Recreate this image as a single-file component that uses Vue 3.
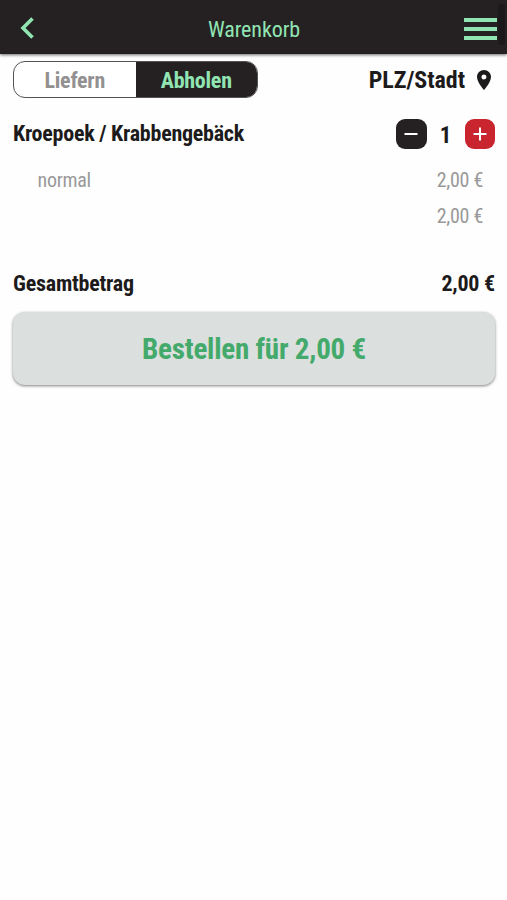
<script setup>
import { computed, ref } from "vue";

const mode = ref("abholen");
const amount = ref(1);
const price = 2;

const format = (value) => `${value.toFixed(2).replace(".", ",")} €`;
const total = computed(() => format(amount.value * price));

const decrease = () => {
  if (amount.value > 1) {
    amount.value--;
  }
};
</script>

<template>
  <div class="page">
    <header class="topbar">
      <button class="back" aria-label="Zurück">
        <svg width="16" height="24" viewBox="0 0 16 24">
          <path d="M13.500 2.500 L4 12 L13.500 21.500" />
        </svg>
      </button>
      <h1>Warenkorb</h1>
      <button class="menu" aria-label="Menü">
        <span></span>
        <span></span>
        <span></span>
      </button>
      <i class="scrollbar"></i>
    </header>

    <main>
      <div class="options">
        <div class="switch">
          <button :class="{ active: mode === 'liefern' }" @click="mode = 'liefern'">
            Liefern
          </button>
          <button :class="{ active: mode === 'abholen' }" @click="mode = 'abholen'">
            Abholen
          </button>
        </div>
        <div class="location">
          <span>PLZ/Stadt</span>
          <svg width="14" height="20" viewBox="0 0 14 20">
            <path
              fill="#1c1a1b"
              fill-rule="evenodd"
              d="M7 0C3.1 0 0 3.1 0 7c0 5.200 7 13 7 13s7-7.800 7-13c0-3.900-3.100-7-7-7zm0 9.500a2.500 2.500 0 1 1 0-5 2.500 2.500 0 0 1 0 5z"
            />
          </svg>
        </div>
      </div>

      <div class="item">
        <h2>Kroepoek / Krabbengebäck</h2>
        <div class="counter">
          <button class="minus" aria-label="Weniger" @click="decrease">
            <svg width="14" height="14" viewBox="0 0 14 14"><path d="M0.500 7H13.500" /></svg>
          </button>
          <span>{{ amount }}</span>
          <button class="plus" aria-label="Mehr" @click="amount++">
            <svg width="14" height="14" viewBox="0 0 14 14"><path d="M0.500 7H13.500M7 0.500V13.500" /></svg>
          </button>
        </div>
      </div>
      <div class="detail">
        <span>normal</span>
        <span>{{ format(price) }}</span>
      </div>
      <div class="detail sum">
        <span></span>
        <span>{{ total }}</span>
      </div>

      <div class="total">
        <span>Gesamtbetrag</span>
        <span>{{ total }}</span>
      </div>
      <button class="order">Bestellen für {{ total }}</button>
    </main>
  </div>
</template>

<style>
body {
  background-color: #fefefe;
}
</style>

<style scoped>
.page {
  height: 900px;
  font-family: "Roboto Condensed", Roboto, sans-serif;
  font-stretch: 75%;
  color: #1c1a1b;
}
button {
  font: inherit;
  padding: 0;
  border: none;
  background: none;
}
h1,
h2 {
  margin: 0;
}
.topbar {
  position: relative;
  display: grid;
  grid-template-columns: 54px 1fr 54px;
  align-items: center;
  height: 54px;
  padding-top: 1px;
  box-sizing: border-box;
  background-color: #252122;
  box-shadow: 0 1px 3px rgba(0, 0, 0, 0.6);
}
.back {
  display: flex;
  padding-left: 19px;
}
.back path {
  fill: none;
  stroke: #91e5b3;
  stroke-width: 3.6;
}
h1 {
  color: #91e5b3;
  font-size: 22px;
  line-height: 30px;
  font-weight: 400;
  letter-spacing: -0.1px;
  text-align: center;
  padding: 4px 0 0 1px;
}
.menu {
  display: flex;
  flex-direction: column;
  gap: 5px;
  width: 33px;
  margin-left: 11px;
  padding-top: 2px;
}
.menu span {
  height: 4px;
  background-color: #91e5b3;
}
.scrollbar {
  position: absolute;
  top: 4px;
  right: 2px;
  width: 7px;
  height: 41px;
  border-radius: 3px;
  background-color: #1c191a;
}
main {
  padding: 7px 12px 0 13px;
}
.options {
  display: flex;
  justify-content: space-between;
  align-items: center;
  height: 37px;
}
.switch {
  display: flex;
  width: 245px;
  height: 37px;
  box-sizing: border-box;
  border: 1px solid #555253;
  border-radius: 12px;
  overflow: hidden;
  background-color: #fff;
}
.switch button {
  flex: 1;
  padding-top: 2px;
  color: #929091;
  font-size: 22px;
  font-weight: 700;
  letter-spacing: -0.25px;
}
.switch .active {
  color: #91e5b3;
  background-color: #252122;
}
.location {
  display: flex;
  align-items: center;
  gap: 12px;
  padding-right: 4px;
  font-size: 24px;
  font-weight: 700;
  letter-spacing: -0.05px;
}
.location span {
  padding-top: 1px;
}
.item {
  display: flex;
  justify-content: space-between;
  align-items: center;
  height: 30px;
  margin-top: 21px;
}
h2 {
  padding-bottom: 1px;
  font-size: 22px;
  font-weight: 700;
  letter-spacing: -0.25px;
}
.counter {
  display: flex;
  align-items: center;
  font-size: 23px;
  font-weight: 700;
}
.counter span {
  width: 38px;
  padding-top: 2px;
  text-align: center;
}
.counter button {
  display: flex;
  align-items: center;
  justify-content: center;
  width: 30.5px;
  height: 30px;
  border-radius: 9px;
}
.minus {
  background-color: #252122;
}
.plus {
  background-color: #c8252e;
}
.counter path {
  stroke: #fff;
  stroke-width: 2;
}
.detail {
  display: flex;
  justify-content: space-between;
  align-items: center;
  height: 36px;
  margin-top: 13px;
  padding: 0 12px 0 24.5px;
  color: #999;
  font-size: 20px;
  letter-spacing: -0.3px;
}
.sum {
  margin-top: 0;
}
.total {
  display: flex;
  justify-content: space-between;
  align-items: center;
  height: 30px;
  margin-top: 34px;
  font-size: 22px;
  font-weight: 700;
  letter-spacing: -0.22px;
}
.order {
  width: 100%;
  height: 73px;
  margin-top: 14px;
  border-radius: 12px;
  color: #43aa6b;
  background-color: #dbdfde;
  box-shadow: 0 1px 3px rgba(0, 0, 0, 0.5);
  font-size: 29px;
  font-weight: 700;
  letter-spacing: -0.2px;
}
</style>
